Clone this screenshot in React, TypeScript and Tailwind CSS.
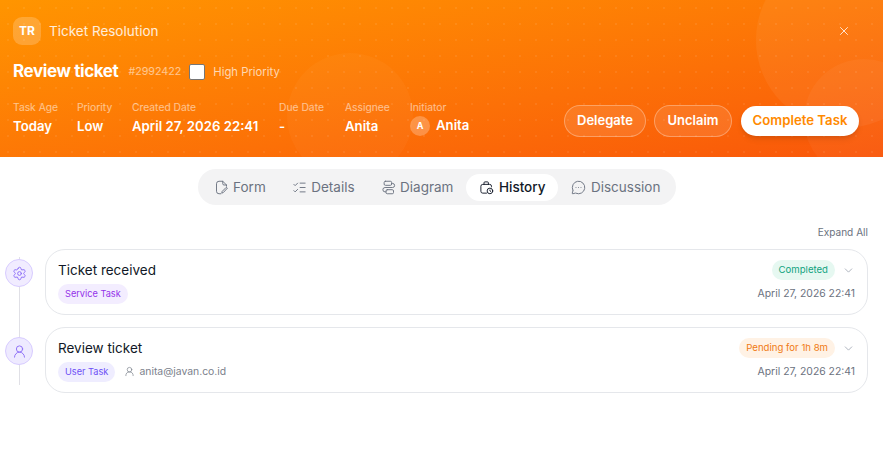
import React from 'react';
import { X, ChevronDown, Settings, UserRound, ListChecks, MessageCircleMore } from 'lucide-react';

function FormIcon({ size = 15, strokeWidth = 1.5 }: { size?: number; strokeWidth?: number }) {
  return (
    <svg width={size} height={size} viewBox="0 0 24 24" fill="none" stroke="currentColor" strokeWidth={strokeWidth} strokeLinecap="round" strokeLinejoin="round">
      <path d="M11 22H8a4 4 0 0 1-4-4V6a4 4 0 0 1 4-4h6l6 6v2" />
      <path d="M14 2v4a2 2 0 0 0 2 2h4" />
      <path d="M21 13.500 15 20l-2.500 1 .5-2.700 6-6z" />
    </svg>
  );
}

function DiagramIcon({ size = 15, strokeWidth = 1.5 }: { size?: number; strokeWidth?: number }) {
  return (
    <svg width={size} height={size} viewBox="0 0 24 24" fill="none" stroke="currentColor" strokeWidth={strokeWidth} strokeLinecap="round" strokeLinejoin="round">
      <rect x="5" y="2" width="12" height="6.500" rx="2" />
      <rect x="8" y="15.500" width="12" height="6.500" rx="2" />
      <path d="M17 5.500h1.500a3 3 0 0 1 0 6.500h-12a2 2 0 0 0 0 7H8" />
    </svg>
  );
}

function CaseClockIcon({ size = 15, strokeWidth = 1.5 }: { size?: number; strokeWidth?: number }) {
  return (
    <svg width={size} height={size} viewBox="0 0 24 24" fill="none" stroke="currentColor" strokeWidth={strokeWidth} strokeLinecap="round" strokeLinejoin="round">
      <path d="M12 21H6a3 3 0 0 1-3-3v-8a3 3 0 0 1 3-3h11a3 3 0 0 1 3 3v1" />
      <path d="M8 7V4.500A1.500 1.500 0 0 1 9.500 3h4A1.500 1.500 0 0 1 15 4.500V7" />
      <circle cx="17.500" cy="17.500" r="4.500" />
      <path d="M17.500 16v1.500l1 .8" />
    </svg>
  );
}

const meta = [
  { label: 'Task Age', value: 'Today', width: 'w-[64px]' },
  { label: 'Priority', value: 'Low', width: 'w-[55px]' },
  { label: 'Created Date', value: 'April 27, 2026 22:41', width: 'w-[147px]' },
  { label: 'Due Date', value: '-', width: 'w-[66px]' },
  { label: 'Assignee', value: 'Anita', width: 'w-[65px]' },
];

const tabs = [
  { label: 'Form', icon: FormIcon },
  { label: 'Details', icon: ListChecks },
  { label: 'Diagram', icon: DiagramIcon },
  { label: 'History', icon: CaseClockIcon, active: true },
  { label: 'Discussion', icon: MessageCircleMore },
];

function Header() {
  return (
    <div className="relative h-[157px] overflow-hidden bg-gradient-to-br from-[#ff9500] to-[#f9560a] px-[13px] pt-[17px] text-white">
      {/* dot pattern + decorative circles */}
      <div className="absolute inset-0 bg-[radial-gradient(rgba(255,255,255,0.07)_1px,transparent_1px)] bg-[size:16px_16px]" />
      <div className="absolute left-[756px] top-[-48px] h-[176px] w-[176px] rounded-full bg-white/5" />
      <div className="absolute left-[804px] top-[59px] h-[120px] w-[120px] rounded-full bg-white/[0.04]" />
      <div className="absolute left-[287px] top-[53px] h-[126px] w-[126px] rounded-full bg-white/[0.03]" />

      <div className="relative flex h-[28px] items-center gap-[8px]">
        <div className="flex h-[28px] w-[28px] items-center justify-center rounded-[9px] bg-white/20 text-[12px] font-bold">TR</div>
        <span className="text-[13.5px] text-white/85">Ticket Resolution</span>
        <button className="absolute right-[19px] top-[7px] text-white/90">
          <X size={14} strokeWidth={1.5} />
        </button>
      </div>

      <div className="relative mt-[13px] flex h-[28px] items-center">
        <span className="text-[17px] font-bold tracking-[-0.4px]">Review ticket</span>
        <span className="ml-[10px] text-[10.7px] text-white/55">#2992422</span>
        <span className="ml-[8px] h-[16px] w-[16px] rounded-[2px] border border-[#767676] bg-white" />
        <span className="ml-[8px] text-[11.3px] text-white/70">High Priority</span>
      </div>

      <div className="relative mt-[14px] flex items-start">
        {meta.map((m) => (
          <div key={m.label} className={m.width}>
            <div className="text-[10.3px] leading-[15px] text-white/55">{m.label}</div>
            <div className="mt-[1px] text-[13.2px] font-semibold leading-[20px]">{m.value}</div>
          </div>
        ))}
        <div>
          <div className="text-[10.3px] leading-[15px] text-white/55">Initiator</div>
          <div className="mt-[1px] flex h-[20px] items-center gap-[6px]">
            <span className="flex h-[20px] w-[20px] items-center justify-center rounded-full bg-white/25 text-[9px] font-bold">A</span>
            <span className="text-[13.2px] font-semibold">Anita</span>
          </div>
        </div>
        <div className="absolute right-[11px] top-[5px] flex items-center">
          <button className="h-[32px] w-[82px] rounded-full border border-white/30 bg-white/10 text-[13px] font-semibold">Delegate</button>
          <button className="ml-[8px] h-[32px] w-[78px] rounded-full border border-white/30 bg-white/10 text-[13px] font-semibold">Unclaim</button>
          <button className="ml-[9px] h-[30px] w-[118px] rounded-full bg-white text-[13.2px] font-semibold text-[#ff8a00] shadow-md">Complete Task</button>
        </div>
      </div>
    </div>
  );
}

function TabBar() {
  return (
    <div className="mt-[12px] flex justify-center pr-[9px]">
      <div className="flex h-[36px] items-center rounded-full bg-[#f3f3f4] px-[3px]">
        {tabs.map((t) => {
          const Icon = t.icon;
          return (
            <div
              key={t.label}
              className={`flex h-[27px] items-center gap-[4.5px] rounded-full px-[13px] text-[13.5px] ${
                t.active ? 'bg-white font-medium text-[#111827]' : 'text-[#6b7280]'
              }`}
            >
              <Icon size={15} strokeWidth={1.5} />
              {t.label}
            </div>
          );
        })}
      </div>
    </div>
  );
}

function Step({ icon: Icon, iconBg, title, badge, badgeClass, email, status, statusClass, line }: any) {
  return (
    <div className="relative flex h-[66px] items-start">
      {line}
      <div className="flex w-[45px] justify-center pr-[7px] pt-[10px]">
        <span className={`z-10 flex h-[28px] w-[28px] items-center justify-center rounded-full border border-[#d8ccff] ${iconBg}`}>
          <Icon size={15} strokeWidth={1.5} className="text-[#8b6cf6]" />
        </span>
      </div>
      <div className="flex h-[66px] flex-1 items-start justify-between rounded-[20px] border border-[#e5e7eb] px-[12px] pt-[10px]">
        <div>
          <div className="text-[13.5px] leading-[20px] text-[#111827]">{title}</div>
          <div className="mt-[4px] flex items-center gap-[9px]">
            <span className={`flex h-[20px] items-center rounded-full px-[7px] text-[9.2px] ${badgeClass}`}>{badge}</span>
            {email && (
              <span className="flex items-center gap-[4px] text-[10.4px] text-[#7b818c]">
                <UserRound size={11} strokeWidth={1.5} />
                {email}
              </span>
            )}
          </div>
        </div>
        <div className="flex flex-col items-end">
          <div className="flex items-center gap-[7px]">
            <span className={`flex h-[20px] items-center rounded-full px-[7px] text-[9.6px] ${statusClass}`}>{status}</span>
            <ChevronDown size={13} strokeWidth={1.5} className="text-[#9ca3af]" />
          </div>
          <span className="mt-[6px] text-[10.4px] leading-[16px] text-[#6b7280]">April 27, 2026 22:41</span>
        </div>
      </div>
    </div>
  );
}

export default function App() {
  return (
    <div className="h-[474px] w-[883px] overflow-hidden bg-white font-['Inter',sans-serif]">
      <Header />
      <TabBar />
      <div className="mt-[20px] flex justify-end pr-[15px] text-[10.1px] leading-[14px] text-[#6b7280]">Expand All</div>
      <div className="mt-[10px] flex flex-col gap-[12px] pr-[15px]">
        <Step
          icon={Settings}
          iconBg="bg-[#f1ecff]"
          title="Ticket received"
          badge="Service Task"
          badgeClass="bg-[#f3edff] text-[#9333ea]"
          status="Completed"
          statusClass="bg-[#e6f8f1] text-[#10a37f]"
          line={<div className="absolute left-[19px] top-[8px] h-[70px] w-px bg-[#e0e0e6]" />}
        />
        <Step
          icon={UserRound}
          iconBg="bg-[#eeeaff]"
          title="Review ticket"
          badge="User Task"
          badgeClass="bg-[#efedff] text-[#6d4ff6]"
          email="anita@javan.co.id"
          status="Pending for 1h 8m"
          statusClass="bg-[#fff2e5] text-[#f07a13]"
          line={<div className="absolute left-[19px] top-0 h-[58px] w-px bg-[#e0e0e6]" />}
        />
      </div>
    </div>
  );
}
